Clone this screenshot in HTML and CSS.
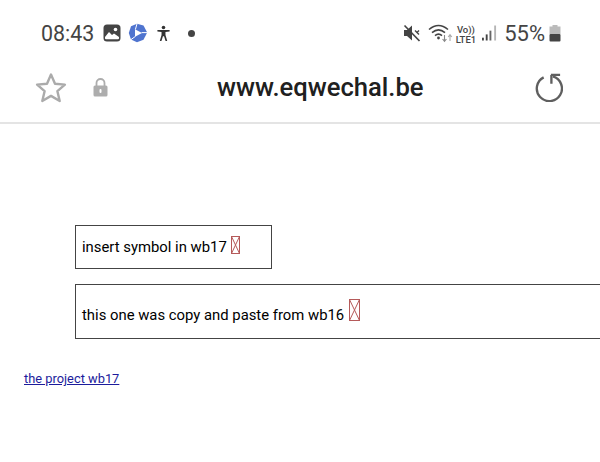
FILE: index.html
```html
<!DOCTYPE html>
<html lang="en">
<head>
<meta charset="utf-8">
<title>www.eqwechal.be</title>
<link rel="stylesheet" href="styles.css">
</head>
<body>
<header class="chrome">
  <div class="status">
    <div class="status-left">
      <span class="time">08:43</span>
      <svg class="ic-gallery" viewBox="0 0 18 18"><rect x="0.5" y="0.5" width="17" height="17" rx="3.5" fill="#444"/><circle cx="12.5" cy="5.5" r="1.8" fill="#fff"/><path d="M2 13l4-5 3 3 2-1.5 5 3.5v1.2a1 1 0 0 1-1 1H3a1 1 0 0 1-1-1z" fill="#fff"/></svg>
      <svg class="ic-photos" viewBox="0 0 20 20"><path d="M9 .8 15.5 2.6 19.2 9.6 15.5 16.8 9 19.2 3 16.6.8 10 3 3.2Z" fill="#4f74cf"/><path d="M7 6.2 14 10 7 13.8Z" fill="#fff"/><path d="M9 .8 7.4 6.4M19.2 9.6H13.6M3 16.6 7.4 13.4" stroke="#fff" stroke-width="1" fill="none"/></svg>
      <svg class="ic-access" viewBox="0 0 16 18"><circle cx="8" cy="2.6" r="1.9" fill="#333"/><path d="M1.5 5.2h13v1.6l-4.4.6v3.2l1.9 6.4h-1.8L8.6 12H7.4L5.8 17H4l1.9-6.4V7.4l-4.4-.6z" fill="#333"/></svg>
      <span class="dot"></span>
    </div>
    <div class="status-right">
      <svg class="ic-mute" viewBox="0 0 18 18"><path d="M1 6h3l5-4.5v15L4 12H1z" fill="#444"/><path d="M1.5 1.5 16.5 17" stroke="#444" stroke-width="1.7" fill="none"/><path d="M12 6.5l4 4M16 6.5l-2.5 2.5" stroke="#444" stroke-width="1.4" fill="none"/></svg>
      <svg class="ic-wifi" viewBox="0 0 26 20"><path d="M1 6.5Q10.5-1.5 20 6.5M4 9.6Q10.5 4 17 9.6M7 12.6Q10.5 9.6 14 12.6" stroke="#444" stroke-width="1.6" fill="none"/><circle cx="10.5" cy="15" r="1.4" fill="#444"/><path d="M16.5 12v6M14.6 16l1.9 2.4 1.9-2.4" stroke="#888" stroke-width="1.1" fill="none"/><path d="M22 18v-6M20.2 14l1.8-2.4 1.8 2.4" stroke="#aaa" stroke-width="1.1" fill="none"/></svg>
      <span class="net"><span>Vo))</span><span>LTE1</span></span>
      <svg class="ic-signal" viewBox="0 0 16 16"><rect x="0" y="13" width="2" height="3" fill="#444"/><rect x="4" y="9.5" width="2" height="6.5" fill="#444"/><rect x="8" y="5.5" width="2" height="10.5" fill="#666"/><rect x="13" y="0" width="2" height="16" fill="#b5b5b5"/></svg>
      <span class="pct">55%</span>
      <svg class="ic-batt" viewBox="0 0 12 17"><rect x="3.5" y="0" width="5" height="2" fill="#bbb"/><rect x="0.5" y="1.5" width="11" height="7.5" fill="#bbb"/><rect x="0.5" y="9" width="11" height="7.5" rx="1" fill="#444"/></svg>
    </div>
  </div>
  <div class="addr">
    <svg class="ic-star" viewBox="0 0 32 31"><path d="M16 2.5l4 9.2 9.9.9-7.5 6.6 2.3 9.8L16 23.9 7.3 29l2.3-9.8-7.5-6.6 9.9-.9z" fill="none" stroke="#ababab" stroke-width="2.4" stroke-linejoin="round"/></svg>
    <svg class="ic-lock" viewBox="0 0 15 19"><path d="M3.5 8V5a4 4 0 0 1 8 0v3" fill="none" stroke="#adadad" stroke-width="1.8"/><rect x="0.5" y="7.5" width="14" height="11" rx="1.5" fill="#adadad"/><rect x="6.5" y="11" width="2" height="4" rx="1" fill="#fff"/></svg>
    <span class="url">www.eqwechal.be</span>
    <svg class="ic-reload" viewBox="0 0 30 30"><path d="M10 4.5A13 13 0 1 0 19.5 3.6" fill="none" stroke="#5f5f5f" stroke-width="2.4"/><path d="M17.5 2H27M18 2v9" fill="none" stroke="#5f5f5f" stroke-width="2.4"/></svg>
  </div>
</header>
<main class="page">
  <div class="box box-small">insert symbol in wb17 <svg class="tofu tofu-s" viewBox="0 0 9 18" preserveAspectRatio="none"><rect x="0.5" y="0.5" width="8" height="17"/><path d="M0.5 0.5 8.5 17.5M8.5 0.5 0.5 17.5"/></svg></div>
  <div class="box box-large">this one was copy and paste from wb16 <svg class="tofu tofu-l" viewBox="0 0 11 22" preserveAspectRatio="none"><rect x="0.5" y="0.5" width="10" height="21"/><path d="M0.5 0.5 10.5 21.5M10.5 0.5 0.5 21.5"/></svg></div>
  <a class="link" href="#">the project wb17</a>
</main>
</body>
</html>
```
FILE: styles.css
```css
html, body { margin: 0; padding: 0; }
body {
  width: 600px;
  height: 462px;
  overflow: hidden;
  background: #fff;
  font-family: Roboto, "Liberation Sans", sans-serif;
  color: #000;
}
svg { display: block; flex: none; }
.chrome {
  height: 122px;
  border-bottom: 2px solid #e4e4e4;
  display: flex;
  flex-direction: column;
}
.status {
  height: 66px;
  display: flex;
  justify-content: space-between;
  align-items: center;
  padding: 0 39px 0 41px;
}
.status-left, .status-right { display: flex; align-items: center; }
.time { font-size: 21.4px; color: #444; margin-right: 9px; }
.ic-gallery { width: 18px; height: 18px; margin-right: 7px; }
.ic-photos { width: 20px; height: 20px; margin-right: 8px; }
.ic-access { width: 15px; height: 17px; margin-right: 17px; }
.dot { width: 7px; height: 7px; border-radius: 50%; background: #444; }
.ic-mute { width: 18px; height: 18px; margin-right: 7px; }
.ic-wifi { width: 26px; height: 20px; margin-right: 2px; }
.net {
  display: flex;
  flex-direction: column;
  align-items: center;
  font-size: 9.5px;
  font-weight: 500;
  line-height: 10px;
  color: #444;
  margin: 3px 6px 0 0;
}
.ic-signal { width: 15px; height: 16px; margin-right: 7px; }
.pct { font-size: 22px; color: #444; margin-right: 4px; }
.ic-batt { width: 12px; height: 17px; }
.addr {
  flex: 1;
  display: flex;
  align-items: center;
  padding: 0 37px 14px 35px;
}
.ic-star { width: 32px; height: 31px; margin-right: 26px; }
.ic-lock { width: 15px; height: 19px; }
.url {
  margin-left: 109px;
  font-size: 25.6px;
  font-weight: 500;
  color: #202020;
}
.ic-reload { width: 29px; height: 29px; margin-left: auto; }
.page { padding: 101px 0 0 24px; }
.box {
  display: flex;
  align-items: center;
  margin-left: 51px;
  border: 1px solid #444;
  padding-left: 6px;
  font-size: 14.85px;
  box-sizing: border-box;
}
.box-small { width: 197px; height: 44px; margin-bottom: 15px; gap: 4px; }
.box-large { width: 525px; height: 55px; margin-bottom: 29px; padding-top: 6px; gap: 5px; border-right: 0; }
.tofu rect, .tofu path { fill: none; stroke: #b55a5a; stroke-width: 1; }
.tofu-s { width: 9px; height: 18px; margin-top: -4px; }
.tofu-l { width: 11px; height: 22px; margin-top: -10px; }
.link { font-size: 12.85px; color: #1c1c9c; text-decoration: underline; }
```
